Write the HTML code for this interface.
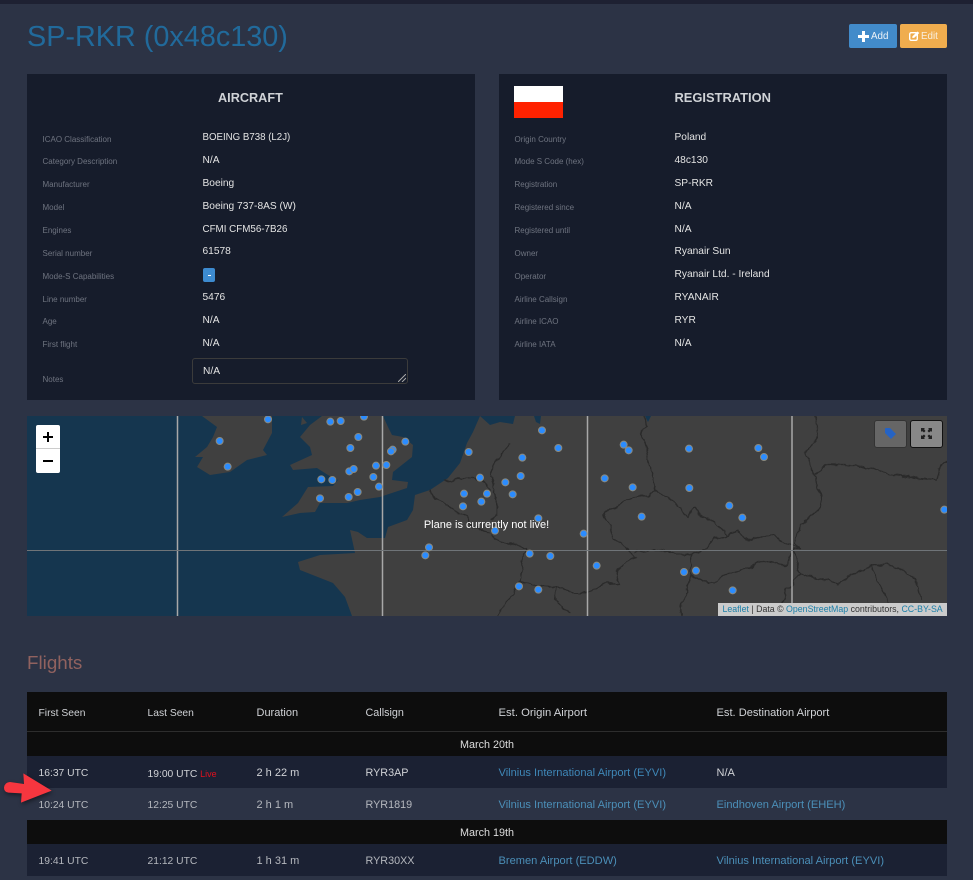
<!DOCTYPE html>
<html><head><meta charset="utf-8"><title>SP-RKR</title>
<style>
html,body{margin:0;padding:0}
body{width:973px;height:880px;position:relative;overflow:hidden;background:#2c3345;font-family:"Liberation Sans",Arial,sans-serif;color:#e4e4e4}
.a{position:absolute}
.t{position:absolute;white-space:nowrap;line-height:14px;font-size:10.2px;margin-top:1px}
.l{position:absolute;white-space:nowrap;line-height:12px;font-size:8px;color:#6f7480;margin-top:1px}
.h{position:absolute;white-space:nowrap;line-height:16px;font-size:12.7px;font-weight:bold;color:#cfd2d6}
.c{position:absolute;white-space:nowrap;line-height:14px;font-size:11px;color:#d0d2d6}
.n{font-size:10.3px;margin-top:1px}
.b{color:#4b8fb8;font-size:11.1px}
.g{color:#b5b8be}
</style></head><body>
<div class="a" style="left:0;top:0;width:973px;height:4px;background:#1e2132"></div>
<div class="a" style="left:27px;top:20px;font-size:28.800px;line-height:34px;color:#216a9b;white-space:nowrap">SP-RKR (0x48c130)</div>

<div class="a" style="left:849px;top:24px;width:48px;height:24px;background:#428bca;border-radius:2px"></div>
<svg class="a" style="left:858px;top:31px" width="11" height="11" viewBox="0 0 11 11"><path d="M4 0h3v4h4v3H7v4H4V7H0V4h4z" fill="#fff"/></svg>
<div class="a" style="left:871px;top:31px;font-size:9.800px;line-height:12px;color:#eef3f8">Add</div>
<div class="a" style="left:900px;top:24px;width:47px;height:24px;background:#f0ad4e;border-radius:2px"></div>
<svg class="a" style="left:909px;top:31px" width="11" height="10" viewBox="0 0 11 10"><rect x=".7" y="1.700" width="7.600" height="7.600" rx="1.500" fill="none" stroke="#fff" stroke-width="1.400"/><path d="M3.500 5.200 8.500.5l1.800 1.500-5 4.800-2 .3z" fill="#fff"/></svg>
<div class="a" style="left:921px;top:31px;font-size:9.800px;line-height:12px;color:#f8efe0">Edit</div>

<div class="a" style="left:27px;top:74px;width:448px;height:326px;background:#161c2b"></div>
<div class="a" style="left:499px;top:74px;width:448px;height:326px;background:#161c2b"></div>

<div class="h" style="left:218px;top:90px">AIRCRAFT</div>
<div class="l" style="left:42.500px;top:133px">ICAO Classification</div>
<div class="l" style="left:42.500px;top:155px">Category Description</div>
<div class="l" style="left:42.500px;top:178px">Manufacturer</div>
<div class="l" style="left:42.500px;top:201px">Model</div>
<div class="l" style="left:42.500px;top:224px">Engines</div>
<div class="l" style="left:42.500px;top:247px">Serial number</div>
<div class="l" style="left:42.500px;top:270px">Mode-S Capabilities</div>
<div class="l" style="left:42.500px;top:293px">Line number</div>
<div class="l" style="left:42.500px;top:315px">Age</div>
<div class="l" style="left:42.500px;top:338px">First flight</div>
<div class="l" style="left:42.500px;top:373px">Notes</div>
<div class="t" style="left:202.500px;top:130px;font-size:9.700px">BOEING B738 (L2J)</div>
<div class="t" style="left:202.500px;top:153px">N/A</div>
<div class="t" style="left:202.500px;top:176px">Boeing</div>
<div class="t" style="left:202.500px;top:199px">Boeing 737-8AS (W)</div>
<div class="t" style="left:202.500px;top:222px;font-size:9.800px">CFMI CFM56-7B26</div>
<div class="t" style="left:202.500px;top:244px">61578</div>
<div class="a" style="left:203px;top:268px;width:12px;height:14px;background:#3d8bd0;border-radius:2px"></div>
<div class="a" style="left:207.500px;top:275px;width:3px;height:1px;background:#fff"></div>
<div class="t" style="left:202.500px;top:290px">5476</div>
<div class="t" style="left:202.500px;top:313px">N/A</div>
<div class="t" style="left:202.500px;top:336px">N/A</div>
<div class="a" style="left:192px;top:358px;width:214px;height:24px;border:1px solid #3b3b3b;border-radius:3px"></div>
<div class="t" style="left:203px;top:364px">N/A</div>
<svg class="a" style="left:398px;top:374px" width="8" height="8"><path d="M0 8 8 0M4 8 8 4" stroke="#aaa" stroke-width="1"/></svg>

<div class="a" style="left:514px;top:86px;width:49px;height:16px;background:#fff"></div>
<div class="a" style="left:514px;top:102px;width:49px;height:16px;background:#ff2200"></div>
<div class="h" style="left:674.500px;top:90px;font-size:12.900px">REGISTRATION</div>
<div class="l" style="left:514.500px;top:133px">Origin Country</div>
<div class="l" style="left:514.500px;top:155px">Mode S Code (hex)</div>
<div class="l" style="left:514.500px;top:178px">Registration</div>
<div class="l" style="left:514.500px;top:201px">Registered since</div>
<div class="l" style="left:514.500px;top:224px">Registered until</div>
<div class="l" style="left:514.500px;top:247px">Owner</div>
<div class="l" style="left:514.500px;top:270px">Operator</div>
<div class="l" style="left:514.500px;top:293px">Airline Callsign</div>
<div class="l" style="left:514.500px;top:315px">Airline ICAO</div>
<div class="l" style="left:514.500px;top:338px">Airline IATA</div>
<div class="t" style="left:674.500px;top:130px">Poland</div>
<div class="t" style="left:674.500px;top:153px">48c130</div>
<div class="t" style="left:674.500px;top:176px">SP-RKR</div>
<div class="t" style="left:674.500px;top:199px">N/A</div>
<div class="t" style="left:674.500px;top:222px">N/A</div>
<div class="t" style="left:674.500px;top:244px">Ryanair Sun</div>
<div class="t" style="left:674.500px;top:267px">Ryanair Ltd. - Ireland</div>
<div class="t" style="left:674.500px;top:290px">RYANAIR</div>
<div class="t" style="left:674.500px;top:313px">RYR</div>
<div class="t" style="left:674.500px;top:336px">N/A</div>

<svg class="a" style="left:27px;top:416px" width="920" height="200" viewBox="27 416 920 200">
<defs><filter id="w" x="-5%" y="-5%" width="110%" height="110%"><feTurbulence type="fractalNoise" baseFrequency=".09" numOctaves="3" seed="4"/><feDisplacementMap in="SourceGraphic" scale="7" xChannelSelector="R" yChannelSelector="G"/></filter></defs>
<rect x="27" y="416" width="920" height="200" fill="#15364f"/>
<g fill="#404040">
<path d="M202 416 217 427 213 437 207 447 195 457 203 457 197 467 210 475 230 472 247 460 267 455 263 450 272 433 272 416z"/>
<path d="M302 417 307 423 301 425z"/>
<path d="M322 416 310 425 300 437 310 447 312 455 290 465 293 470 317 468 328 475 338 480 333 486 308 487 298 503 282 517 300 513 315 512 320 503 347 503 360 500 380 497 407 488 408 482 392 480 393 472 412 457 413 445 403 437 392 435 388 427 383 416z"/>
<path d="M480 416 473 432 467 443 460 463 448 478 430 490 415 495 413 510 407 520 388 527 385 538 367 538 358 532 350 530 355 553 320 555 298 562 300 570 333 583 345 597 352 616 947 616 947 416 651 416 648 422 645 416 541 416 540 424 536 422 534 416 515 416 513 424 500 422 490 425z"/>
</g>
<g filter="url(#w)">
<g transform="translate(490,410) scale(.33333)" fill="none" stroke="#2a2a2a" stroke-width="4" stroke-linejoin="round">
<path d="M465 18 470 50 450 70 470 110 480 180 495 240 470 255 430 260 345 305 355 340 370 385 410 410 435 445 410 455 375 490 390 520 340 525 290 545 240 545 200 530 195 570 240 610"/>
<path d="M435 425 500 420 560 430 605 435 650 415 670 385 710 375 680 340 650 325 610 295 590 320 570 290 520 255 495 240"/>
<path d="M710 375 740 365 770 390 800 380 850 378 900 405 930 413 905 420 890 465 830 450 760 480 700 495 670 518 640 515 605 490 605 435"/>
<path d="M975 18 985 80 945 130 970 190 995 260 990 295 930 350 915 400 930 413"/>
<path d="M970 190 1010 165 1100 165 1190 190 1280 205 1340 210 1350 170 1370 150"/>
<path d="M905 420 930 490 1040 520 1140 470 1190 460 1240 480 1280 510 1295 570"/>
<path d="M1140 470 1170 530 1200 590M605 490 590 540 570 590 575 617M930 490 890 540 860 617"/>
<path d="M0 375 40 395 105 415 90 515 200 530M90 515 60 560 20 617M60 100 10 170 0 190 20 260 20 310 0 330"/>
</g>
<g transform="translate(0,410) scale(.33333)" fill="none" stroke="#2a2a2a" stroke-width="4" stroke-linejoin="round">
<path d="M1290 240 1300 265 1340 290 1400 320 1420 350 1470 370M1330 210 1400 205 1450 210 1470 240"/>
</g>
</g>
<g stroke="#a8a8a8" stroke-width="1.500"><path d="M177.500 416V616M382.500 416V616M587.500 416V616M792 416V616"/></g>
<path d="M27 550.500H947" stroke="#6f7478" stroke-width="1"/>
<g fill="#2b8cff" stroke="#8a8a80" stroke-width="3" transform="translate(0,410) scale(.33333)">
<circle cx="804" cy="28" r="10.500"/><circle cx="659" cy="93" r="10.500"/><circle cx="683" cy="170" r="10.500"/><circle cx="991" cy="35" r="10.500"/><circle cx="1022" cy="33" r="10.500"/><circle cx="1092" cy="20" r="10.500"/><circle cx="1075" cy="81" r="10.500"/><circle cx="1051" cy="114" r="10.500"/><circle cx="1178" cy="119" r="10.500"/><circle cx="1173" cy="124" r="10.500"/><circle cx="1216" cy="95" r="10.500"/><circle cx="1128" cy="167" r="10.500"/><circle cx="1159" cy="165" r="10.500"/><circle cx="1048" cy="184" r="10.500"/><circle cx="1061" cy="177" r="10.500"/><circle cx="964" cy="208" r="10.500"/><circle cx="997" cy="210" r="10.500"/><circle cx="1120" cy="201" r="10.500"/><circle cx="1137" cy="230" r="10.500"/><circle cx="1073" cy="246" r="10.500"/><circle cx="1046" cy="261" r="10.500"/><circle cx="960" cy="265" r="10.500"/><circle cx="1406" cy="126" r="10.500"/><circle cx="1440" cy="203" r="10.500"/><circle cx="1392" cy="251" r="10.500"/><circle cx="1461" cy="251" r="10.500"/><circle cx="1444" cy="275" r="10.500"/><circle cx="1389" cy="289" r="10.500"/><circle cx="1287" cy="412" r="10.500"/><circle cx="1276" cy="436" r="10.500"/>
</g>
<g fill="#2b8cff" stroke="#8a8a80" stroke-width="3" transform="translate(490,410) scale(.33333)">
<circle cx="156" cy="61" r="10.500"/><circle cx="205" cy="114" r="10.500"/><circle cx="97" cy="143" r="10.500"/><circle cx="92" cy="198" r="10.500"/><circle cx="46" cy="217" r="10.500"/><circle cx="68" cy="253" r="10.500"/><circle cx="145" cy="325" r="10.500"/><circle cx="15" cy="362" r="10.500"/><circle cx="281" cy="371" r="10.500"/><circle cx="119" cy="431" r="10.500"/><circle cx="181" cy="438" r="10.500"/><circle cx="320" cy="467" r="10.500"/><circle cx="87" cy="529" r="10.500"/><circle cx="145" cy="539" r="10.500"/><circle cx="401" cy="104" r="10.500"/><circle cx="416" cy="121" r="10.500"/><circle cx="344" cy="205" r="10.500"/><circle cx="428" cy="232" r="10.500"/><circle cx="455" cy="320" r="10.500"/><circle cx="597" cy="116" r="10.500"/><circle cx="598" cy="234" r="10.500"/><circle cx="805" cy="114" r="10.500"/><circle cx="822" cy="141" r="10.500"/><circle cx="718" cy="287" r="10.500"/><circle cx="757" cy="323" r="10.500"/><circle cx="582" cy="486" r="10.500"/><circle cx="618" cy="482" r="10.500"/><circle cx="728" cy="541" r="10.500"/><circle cx="1363" cy="299" r="10.500"/>
</g>
</svg>
<div class="a" style="left:36px;top:425px;width:24px;height:48px;background:#fff;border-radius:2px"></div>
<div class="a" style="left:36px;top:448px;width:24px;height:1px;background:#ccc"></div>
<div class="a" style="left:43px;top:436px;width:10px;height:2px;background:#000"></div>
<div class="a" style="left:47px;top:432px;width:2px;height:10px;background:#000"></div>
<div class="a" style="left:43px;top:460px;width:10px;height:2px;background:#000"></div>
<div class="a" style="left:874px;top:420px;width:31px;height:26px;background:#666;border:1px solid #333;border-radius:3px"></div>
<svg class="a" style="left:884px;top:427px" width="13" height="13" viewBox="0 0 13 13"><path d="M1 1.500 1.500 1H6L12 7 7 12 1 6z" fill="#2563c4"/></svg>
<div class="a" style="left:910px;top:420px;width:31px;height:26px;background:#888;border:1px solid #111;border-radius:3px"></div>
<svg class="a" style="left:921px;top:428px" width="11" height="11" viewBox="0 0 11 11" fill="#222"><path d="M0 0H4L3 1 4.500 3 3 4.500 1 3 0 4zM11 0H7L8 1 6.500 3 8 4.500 10 3 11 4zM0 11H4L3 10 4.500 8 3 6.500 1 8 0 7zM11 11H7L8 10 6.500 8 8 6.500 10 8 11 7z"/></svg>
<div class="a" style="left:423px;top:518px;width:127px;text-align:center;font-size:11px;line-height:14px;color:#fff;white-space:nowrap">Plane is currently not live!</div>
<div class="a" style="left:718px;top:603px;width:229px;height:13px;background:#cbcbcb;font-size:8.800px;line-height:13px;color:#333;white-space:nowrap;text-indent:4.500px;overflow:hidden"><span style="color:#1b7fa8">Leaflet</span> | Data © <span style="color:#1b7fa8">OpenStreetMap</span> contributors, <span style="color:#1b7fa8">CC-BY-SA</span></div>

<div class="a" style="left:27px;top:651px;font-size:18.800px;line-height:24px;color:#91625f">Flights</div>

<div class="a" style="left:27px;top:692px;width:920px;height:39px;background:#0d0d0d"></div>
<div class="a" style="left:27px;top:731px;width:920px;height:1px;background:#2d2d2d"></div>
<div class="a" style="left:27px;top:732px;width:920px;height:24px;background:#0d0d0d"></div>
<div class="a" style="left:27px;top:756px;width:920px;height:32px;background:#1b2133"></div>
<div class="a" style="left:27px;top:788px;width:920px;height:32px;background:#2c3345"></div>
<div class="a" style="left:27px;top:820px;width:920px;height:24px;background:#0d0d0d"></div>
<div class="a" style="left:27px;top:844px;width:920px;height:32px;background:#1b2133"></div>

<div class="c n" style="left:38.500px;top:706px">First Seen</div>
<div class="c n" style="left:147.500px;top:706px">Last Seen</div>
<div class="c" style="left:256.500px;top:706px">Duration</div>
<div class="c" style="left:365.500px;top:706px;font-size:10.800px">Callsign</div>
<div class="c" style="left:498.500px;top:706px;font-size:11.300px">Est. Origin Airport</div>
<div class="c" style="left:716.500px;top:706px;font-size:11.100px">Est. Destination Airport</div>
<div class="c" style="left:387px;width:200px;text-align:center;top:738px;color:#ddd;font-size:10.800px">March 20th</div>

<div class="c n" style="left:38.500px;top:766px">16:37 UTC</div>
<div class="c n" style="left:147.500px;top:766px">19:00 UTC <span style="color:#e0101e;font-size:9px">Live</span></div>
<div class="c" style="left:256.500px;top:766px">2 h 22 m</div>
<div class="c" style="left:365.500px;top:766px;font-size:10.800px">RYR3AP</div>
<div class="c b" style="left:498.500px;top:766px;color:#3f88b8">Vilnius International Airport (EYVI)</div>
<div class="c" style="left:716.500px;top:766px">N/A</div>

<div class="c n g" style="left:38.500px;top:798px">10:24 UTC</div>
<div class="c n g" style="left:147.500px;top:798px">12:25 UTC</div>
<div class="c g" style="left:256.500px;top:798px">2 h 1 m</div>
<div class="c g" style="left:365.500px;top:798px;font-size:10.800px">RYR1819</div>
<div class="c b" style="left:498.500px;top:798px">Vilnius International Airport (EYVI)</div>
<div class="c b" style="left:716.500px;top:798px">Eindhoven Airport (EHEH)</div>

<div class="c" style="left:387px;width:200px;text-align:center;top:826px;color:#ddd;font-size:10.800px">March 19th</div>

<div class="c n g" style="left:38.500px;top:854px">19:41 UTC</div>
<div class="c n g" style="left:147.500px;top:854px">21:12 UTC</div>
<div class="c g" style="left:256.500px;top:854px">1 h 31 m</div>
<div class="c g" style="left:365.500px;top:854px;font-size:10.800px">RYR30XX</div>
<div class="c b" style="left:498.500px;top:854px">Bremen Airport (EDDW)</div>
<div class="c b" style="left:716.500px;top:854px">Vilnius International Airport (EYVI)</div>

<svg class="a" style="left:0;top:770px;filter:drop-shadow(1px 2px 2px rgba(0,0,0,.45))" width="60" height="40" viewBox="0 0 60 40"><path transform="translate(0,-130) scale(.33333)" d="M30 426 72 432 70 400 155 452 63 488 65 460 25 458Q12 456 12 443 14 427 30 426z" fill="#f6363f"/></svg>
</body></html>
